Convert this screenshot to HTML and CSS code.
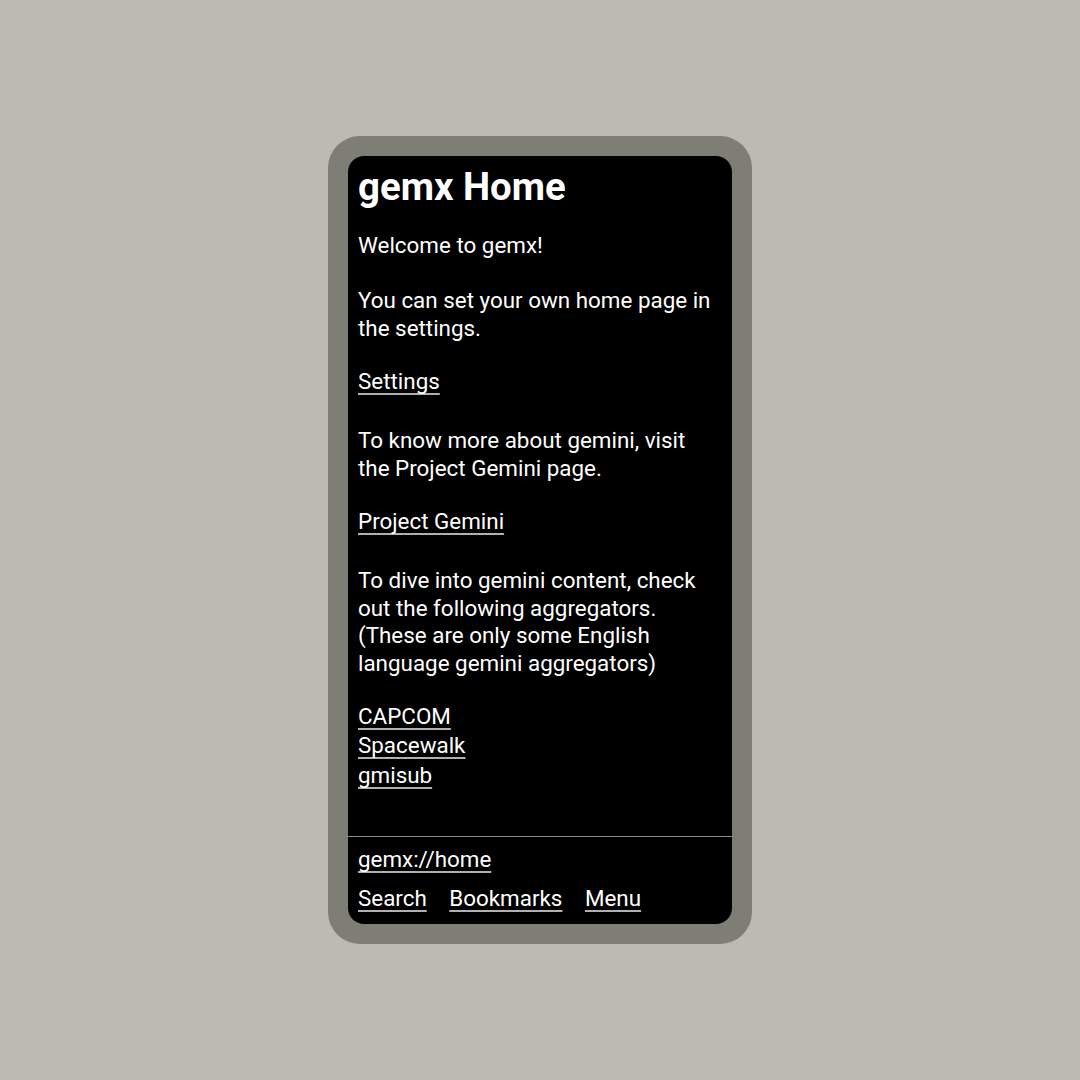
FILE: index.html
```html
<!DOCTYPE html>
<html lang="en">
<head>
  <meta charset="UTF-8">
  <meta name="viewport" content="width=device-width, initial-scale=1.0">
  <title>gemx Home</title>
  <link rel="stylesheet" href="styles.css">
</head>
<body>

  <div class="phone">
    <div class="screen">
      <div class="page">
        <h1>gemx Home</h1>

        <p class="text">Welcome to gemx!</p>
        <p class="text">You can set your own home page in the settings.</p>
        <div class="links">
          <a href="#">Settings</a>
        </div>

        <p class="text">To know more about gemini, visit the Project Gemini page.</p>
        <div class="links">
          <a href="#">Project Gemini</a>
        </div>

        <p class="text">To dive into gemini content, check out the following aggregators. (These are only some English language gemini aggregators)</p>
        <div class="links">
          <a href="#">CAPCOM</a>
          <a href="#">Spacewalk</a>
          <a href="#">gmisub</a>
        </div>
      </div>

      <div class="bar">
        <a href="#" class="url">gemx://home</a>
        <div class="actions">
          <a href="#">Search</a>
          <a href="#">Bookmarks</a>
          <a href="#">Menu</a>
        </div>
      </div>
    </div>
  </div>

</body>
</html>
```

FILE: styles.css
```css
body {
  display: flex;
  justify-content: center;
  align-items: center;
  height: 100vh;
  margin: 0;
  font-family: Roboto, "Noto Sans", sans-serif;
  background-color: #bbbbb3;
}

.phone {
  background-color: #7e7e76;
  border-radius: 32px;
  padding: 20px;
}

.screen {
  width: 384px;
  height: 768px;
  background-color: #000;
  color: #fff;
  border-radius: 16px;
  display: flex;
  flex-direction: column;
  overflow: hidden;
}

.page {
  flex: 1;
  padding: 9px 12px 0 10px;
}

h1 {
  font-size: 38.4px;
  font-weight: 700;
  line-height: 44px;
  margin: 0 0 23px;
}

.text {
  font-size: 22.4px;
  line-height: 27.5px;
  margin: 0 0 27.5px;
}

/* link lines sit a little closer to the text above them */
.links {
  display: flex;
  flex-direction: column;
  align-items: flex-start;
  margin: -3px 0 31px;
}

a {
  color: #fff;
  font-size: 22.4px;
  line-height: 29.5px;
  text-decoration: underline;
  text-decoration-color: #b0b0b0;
  text-decoration-skip-ink: none;
  text-underline-offset: 4px;
}

.bar {
  height: 88px;
  border-top: 1px solid #8a8a8a;
  padding: 8px 10px 0;
  box-sizing: border-box;
}

.url {
  display: block;
  width: fit-content;
}

.actions {
  display: flex;
  gap: 22.5px;
  margin-top: 9.5px;
}
```
